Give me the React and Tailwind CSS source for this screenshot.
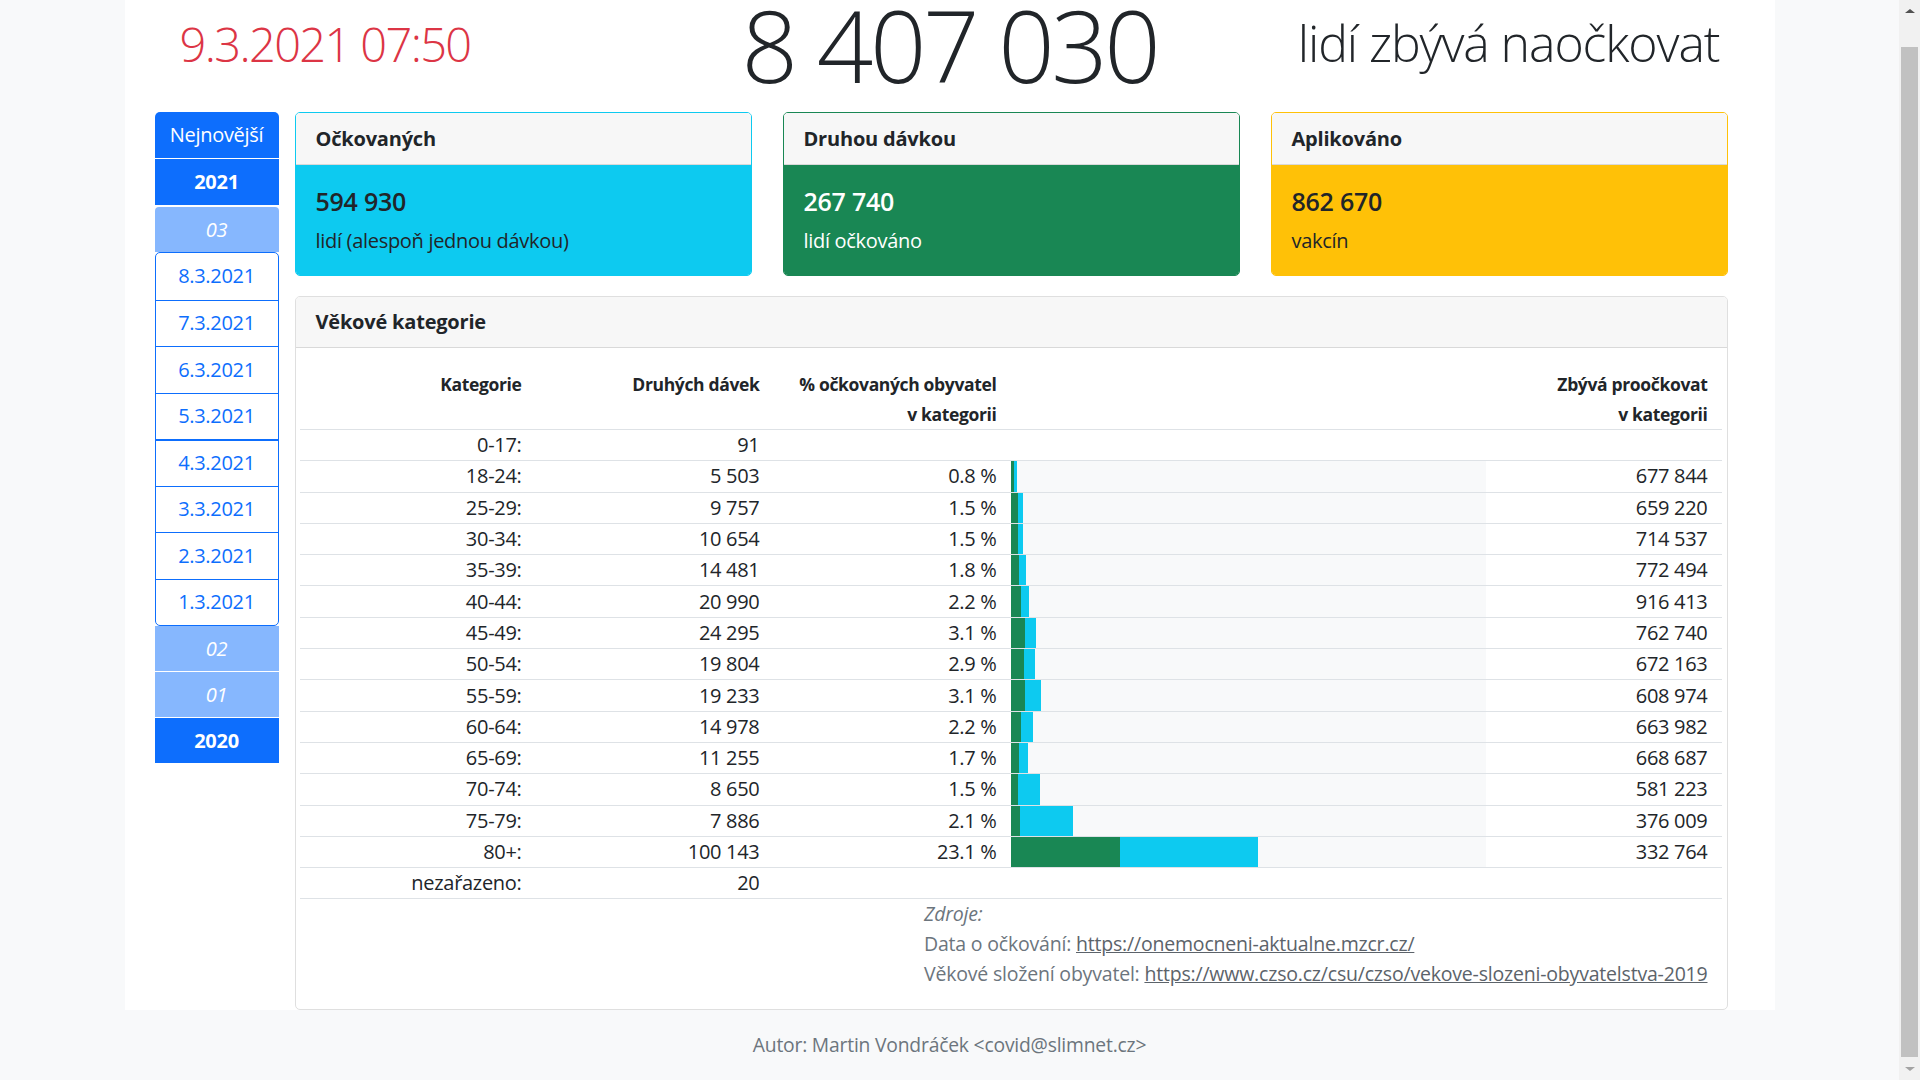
import clsx from "clsx";

const dates = ["8.3.2021", "7.3.2021", "6.3.2021", "5.3.2021", "4.3.2021", "3.3.2021", "2.3.2021", "1.3.2021"];

// [kategorie, druhých dávek, % text, zelená %, modrá %, zbývá]
const rows = [
  ["0-17:", "91", null, 0, 0, ""],
  ["18-24:", "5 503", "0.8 %", 0.8, 0.6, "677 844"],
  ["25-29:", "9 757", "1.5 %", 1.5, 1.1, "659 220"],
  ["30-34:", "10 654", "1.5 %", 1.5, 1.1, "714 537"],
  ["35-39:", "14 481", "1.8 %", 1.8, 1.4, "772 494"],
  ["40-44:", "20 990", "2.2 %", 2.2, 1.6, "916 413"],
  ["45-49:", "24 295", "3.1 %", 3.1, 2.3, "762 740"],
  ["50-54:", "19 804", "2.9 %", 2.9, 2.3, "672 163"],
  ["55-59:", "19 233", "3.1 %", 3.1, 3.4, "608 974"],
  ["60-64:", "14 978", "2.2 %", 2.2, 2.5, "663 982"],
  ["65-69:", "11 255", "1.7 %", 1.7, 2.0, "668 687"],
  ["70-74:", "8 650", "1.5 %", 1.5, 4.7, "581 223"],
  ["75-79:", "7 886", "2.1 %", 2.1, 11.1, "376 009"],
  ["80+:", "100 143", "23.1 %", 23.1, 29.1, "332 764"],
  ["nezařazeno:", "20", null, 0, 0, ""],
];

function StatCard({ title, value, label, body, border }) {
  return (
    <div className={clsx("w-[457px] h-[164px] border rounded-[5px] overflow-hidden flex flex-col", border)}>
      <div className="h-[52px] shrink-0 bg-[#f7f7f7] border-b border-[#d9d9d9] px-[20px] flex items-center text-[20px] font-bold text-[#212529] tracking-[-0.01em]">
        {title}
      </div>
      <div className={clsx("flex-1 px-[20px] pt-[21px]", body)}>
        <div className="text-[25px] font-semibold leading-[31px] tracking-[-0.01em]">{value}</div>
        <div className="mt-[9px] text-[20px] leading-[30px] tracking-[-0.015em]">{label}</div>
      </div>
    </div>
  );
}

function Sidebar() {
  return (
    <div className="w-[124px] shrink-0 flex flex-col text-[20px] text-center tracking-[-0.015em]">
      <div className="h-[47px] bg-[#0d6efd] text-white rounded-t-[5px] border-b border-white flex items-center justify-center">
        Nejnovější
      </div>
      <div className="h-[46px] bg-[#0d6efd] text-white font-bold flex items-center justify-center">2021</div>
      <div className="mt-[2px] h-[45px] bg-[#86b7fe] text-white italic rounded-t-[4px] flex items-center justify-center">
        03
      </div>
      <div className="border border-[#0d6efd] rounded-[5px] bg-white">
        {dates.map((d, i) => (
          <div
            key={d}
            className={clsx(
              "h-[46.5px] flex items-center justify-center text-[#0d6efd]",
              i > 0 && "border-t border-[#0d6efd]",
              i === 4 && "border-t-2"
            )}
          >
            {d}
          </div>
        ))}
      </div>
      <div className="h-[46px] bg-[#86b7fe] text-white italic border-b border-white flex items-center justify-center">02</div>
      <div className="h-[46px] bg-[#86b7fe] text-white italic border-b border-white flex items-center justify-center">01</div>
      <div className="h-[45px] bg-[#0d6efd] text-white font-bold flex items-center justify-center">2020</div>
    </div>
  );
}

function AgeTable() {
  return (
    <div className="mt-[20px] w-[1433px] h-[714px] border border-[#dfdfdf] rounded-[5px] overflow-hidden flex flex-col">
      <div className="h-[51px] shrink-0 bg-[#f7f7f7] border-b border-[#d9d9d9] px-[20px] flex items-center text-[20px] font-bold text-[#212529] tracking-[-0.01em]">
        Věkové kategorie
      </div>
      <div className="pt-[14px] pl-[4px] pr-[5px]">
        <div className="h-[68px] flex border-b border-[#dee2e6] pt-[8px] text-[17.5px] font-bold leading-[29.5px] text-[#212529] text-right tracking-[-0.02em]">
          <div className="w-[228px] pr-[6px]">Kategorie</div>
          <div className="w-[238px] pr-[6px]">Druhých dávek</div>
          <div className="w-[237px] pr-[6px]">
            % očkovaných obyvatel
            <br />v kategorii
          </div>
          <div className="w-[491px]" />
          <div className="flex-1 pr-[14px]">
            Zbývá proočkovat
            <br />v kategorii
          </div>
        </div>
        {rows.map(([cat, dose, pct, green, cyan, rest]) => (
          <div
            key={cat}
            className="h-[31.3px] flex border-b border-[#dee2e6] text-[20px] text-[#212529] text-right tracking-[-0.015em]"
          >
            <div className="w-[228px] pr-[6px] flex items-center justify-end">{cat}</div>
            <div className="w-[238px] pr-[6px] flex items-center justify-end">{dose}</div>
            <div className="w-[237px] pr-[6px] flex items-center justify-end">{pct}</div>
            <div className="w-[491px] px-[8px] flex">
              {pct && (
                <div className="w-[475px] h-full bg-[#f8f9fa] flex">
                  <div className="h-full bg-[#198754]" style={{ width: `${green}%` }} />
                  <div className="h-full bg-[#0dcaf0]" style={{ width: `${cyan}%` }} />
                </div>
              )}
            </div>
            <div className="flex-1 pr-[14px] flex items-center justify-end">{rest}</div>
          </div>
        ))}
        <div className="flex justify-end pr-[14px]">
          <div className="text-[19.5px] leading-[30px] text-[#6c757d] tracking-[-0.01em]">
            <div className="italic">Zdroje:</div>
            <div>
              Data o očkování:{" "}
              <a href="#" className="underline text-[#5c636a]">
                https://onemocneni-aktualne.mzcr.cz/
              </a>
            </div>
            <div>
              Věkové složení obyvatel:{" "}
              <a href="#" className="underline text-[#5c636a]">
                https://www.czso.cz/csu/czso/vekove-slozeni-obyvatelstva-2019
              </a>
            </div>
          </div>
        </div>
      </div>
    </div>
  );
}

function Scrollbar() {
  return (
    <div className="w-[21px] shrink-0 h-full bg-[#f1f1f1] flex flex-col items-center">
      <div className="h-[21px] flex items-center justify-center">
        <div className="w-0 h-0 border-x-[5px] border-x-transparent border-b-[4px] border-b-[#505050]" />
      </div>
      <div className="mt-[26px] w-[17px] h-[1010px] bg-[#c1c1c1]" />
      <div className="flex-1 flex items-center justify-center">
        <div className="w-0 h-0 border-x-[5px] border-x-transparent border-t-[4px] border-t-[#a3a3a3]" />
      </div>
    </div>
  );
}

export default function App() {
  return (
    <div className="h-[1080px] overflow-hidden flex bg-[#f8f9fa] font-['Open_Sans',sans-serif] text-[#212529]">
      <div className="flex-1 flex flex-col">
        <div className="w-[1650px] mx-auto bg-white">
          <div className="h-[90px] grid grid-cols-3 items-center px-[55px] font-light">
            <div className="mb-[2px] text-[47px] leading-[56px] tracking-[-0.035em] text-[#dc3545]">9.3.2021 07:50</div>
            <div className="text-center text-[99px] leading-[86px] tracking-[-0.035em]">8 407 030</div>
            <div className="mb-[4px] text-right text-[50px] leading-[60px] tracking-[-0.022em]">lidí zbývá naočkovat</div>
          </div>
          <div className="mt-[22px] flex items-start pl-[30px] gap-[16px]">
            <Sidebar />
            <div className="w-[1433px]">
              <div className="flex gap-[31px]">
                <StatCard
                  title="Očkovaných"
                  value="594 930"
                  label="lidí (alespoň jednou dávkou)"
                  border="border-[#0dcaf0]"
                  body="bg-[#0dcaf0] text-[#212529]"
                />
                <StatCard
                  title="Druhou dávkou"
                  value="267 740"
                  label="lidí očkováno"
                  border="border-[#198754]"
                  body="bg-[#198754] text-white"
                />
                <StatCard
                  title="Aplikováno"
                  value="862 670"
                  label="vakcín"
                  border="border-[#ffc107]"
                  body="bg-[#ffc107] text-[#212529]"
                />
              </div>
              <AgeTable />
            </div>
          </div>
        </div>
        <div className="flex-1 flex items-center justify-center text-[19.3px] text-[#6c757d] tracking-[-0.01em]">
          Autor: Martin Vondráček &lt;covid@slimnet.cz&gt;
        </div>
      </div>
      <Scrollbar />
    </div>
  );
}
